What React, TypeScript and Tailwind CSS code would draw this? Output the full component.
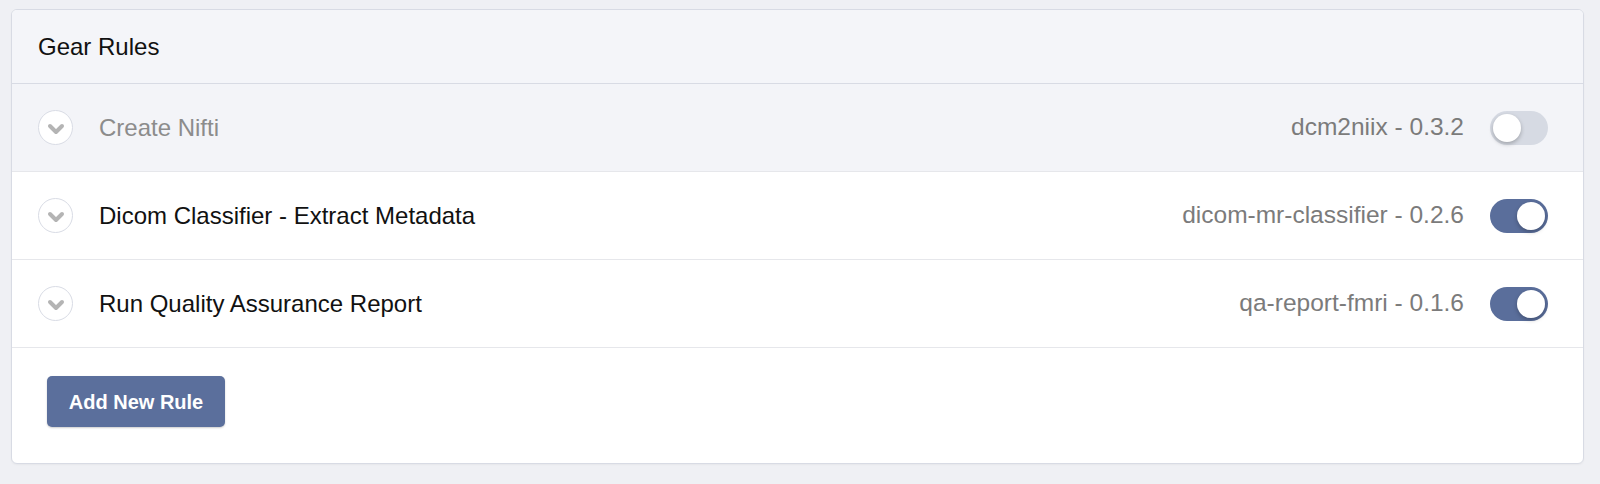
import React, { useState } from 'react';

interface Rule {
    id: number;
    name: string;
    gear: string;
    enabled: boolean;
}

const initialRules: Rule[] = [
    { id: 1, name: 'Create Nifti', gear: 'dcm2niix - 0.3.2', enabled: false },
    { id: 2, name: 'Dicom Classifier - Extract Metadata', gear: 'dicom-mr-classifier - 0.2.6', enabled: true },
    { id: 3, name: 'Run Quality Assurance Report', gear: 'qa-report-fmri - 0.1.6', enabled: true },
];

const Chevron = () => (
    <div className="w-[35px] h-[35px] rounded-full bg-white border-[1.5px] border-[#d9dce5] flex items-center justify-center shrink-0">
        <svg width="18" height="12" viewBox="0 0 18 12" className="mt-[2px]">
            <path d="M3 3 L9 9 L15 3" fill="none" stroke="#b4b4b4" strokeWidth="4" strokeLinecap="round" strokeLinejoin="round" />
        </svg>
    </div>
);

const Toggle: React.FC<{ on: boolean; onClick: () => void }> = ({ on, onClick }) => (
    <button
        onClick={onClick}
        className={`w-[58px] h-[34px] rounded-full flex items-center px-[3px] shrink-0 ${on ? 'bg-[#5a6e9b] justify-end' : 'bg-[#d6dae3] justify-start'}`}
    >
        <span className="w-[28px] h-[28px] rounded-full bg-white shadow-[0_2px_4px_rgba(0,0,0,0.25)]" />
    </button>
);

const App: React.FC = () => {
    const [rules, setRules] = useState(initialRules);

    const toggle = (id: number) =>
        setRules(rules.map(r => (r.id === id ? { ...r, enabled: !r.enabled } : r)));

    return (
        <div className="h-[484px] bg-[#eff0f4] pt-[9px] px-[11px] font-['Liberation_Sans',Arial,sans-serif] antialiased">
            <div className="w-[1573px] bg-white border border-[#d8dbe4] rounded-[6px] overflow-hidden shadow-[0_1px_2px_rgba(0,0,0,0.04)]">
                {/* Header */}
                <div className="h-[74px] bg-[#f4f5f9] border-b border-[#d8dbe4] flex items-center px-[26px]">
                    <h2 className="text-[24px] text-[#111]">Gear Rules</h2>
                </div>

                {/* Rules */}
                {rules.map(rule => (
                    <div
                        key={rule.id}
                        className={`h-[88px] border-b border-[#e6e7eb] flex items-center pl-[26px] pr-[35px] ${rule.enabled ? 'bg-white' : 'bg-[#f3f4f8]'}`}
                    >
                        <Chevron />
                        <span className={`ml-[26px] text-[24px] flex-1 ${rule.enabled ? 'text-[#111]' : 'text-[#8c8c8c]'}`}>
                            {rule.name}
                        </span>
                        <span className="text-[24.5px] text-[#7b7b7b] mr-[26px]">{rule.gear}</span>
                        <Toggle on={rule.enabled} onClick={() => toggle(rule.id)} />
                    </div>
                ))}

                {/* Footer */}
                <div className="pt-[28px] pb-[36px] px-[35px]">
                    <button className="h-[51px] w-[178px] rounded-[5px] bg-[#5b6f9c] text-white text-[20px] font-bold shadow-[0_1px_2px_rgba(0,0,0,0.2)]">
                        Add New Rule
                    </button>
                </div>
            </div>
        </div>
    );
};

export default App;
